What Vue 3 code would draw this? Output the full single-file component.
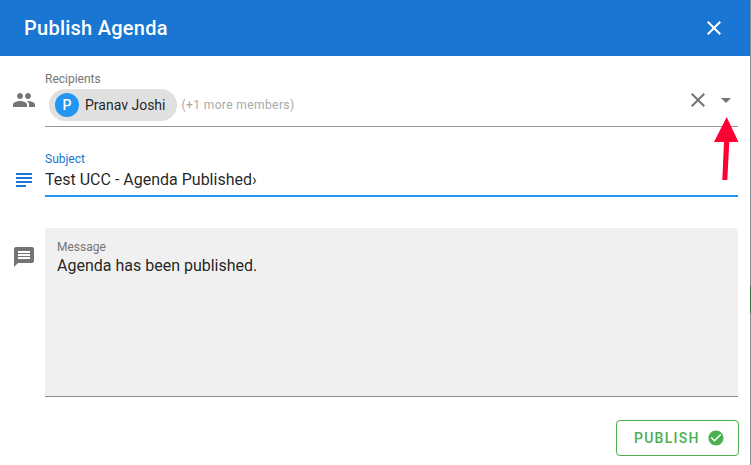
<script setup>
import { ref } from "vue";

const subject = ref("Test UCC - Agenda Published›")
const message = ref("Agenda has been published.")
</script>

<template>
    <div class="page">
        <div class="dialog">
            <header class="title-bar">
                <h1>Publish Agenda</h1>
                <button class="close" type="button" aria-label="Close">
                    <svg viewBox="0 0 24 24" width="24" height="24"><path fill="#fff" d="M19 6.41 17.59 5 12 10.59 6.41 5 5 6.41 10.59 12 5 17.59 6.41 19 12 13.41 17.59 19 19 17.59 13.41 12z" /></svg>
                </button>
            </header>

            <div class="body">
                <div class="row recipients">
                    <svg class="icon" viewBox="0 0 24 24" width="24" height="24"><path d="M16 11c1.66 0 2.99-1.34 2.99-3S17.66 5 16 5c-1.66 0-3 1.34-3 3s1.34 3 3 3zm-8 0c1.66 0 2.99-1.34 2.99-3S9.66 5 8 5C6.34 5 5 6.34 5 8s1.34 3 3 3zm0 2c-2.33 0-7 1.17-7 3.5V19h14v-2.5c0-2.33-4.67-3.5-7-3.5zm8 0c-.29 0-.62.02-.97.05 1.16.84 1.97 1.97 1.97 3.45V19h6v-2.5c0-2.33-4.67-3.5-7-3.5z" /></svg>
                    <div class="field">
                        <label>Recipients</label>
                        <div class="chips">
                            <span class="chip"><span class="avatar">P</span>Pranav Joshi</span>
                            <span class="more">(+1 more members)</span>
                            <span class="spacer"></span>
                            <svg class="clear" viewBox="0 0 24 24" width="24" height="24"><path d="M19 6.41 17.59 5 12 10.59 6.41 5 5 6.41 10.59 12 5 17.59 6.41 19 12 13.41 17.59 19 19 17.59 13.41 12z" /></svg>
                            <svg class="caret" viewBox="0 0 24 24" width="24" height="24"><path d="M7 10l5 5 5-5z" /></svg>
                        </div>
                    </div>
                </div>

                <div class="row subject">
                    <svg class="icon blue" viewBox="0 0 24 24" width="24" height="24"><path d="M4 5h16v2H4zM4 9h16v2H4zM4 13h16v2H4zM4 17h10v2H4z" /></svg>
                    <div class="field focused">
                        <label>Subject</label>
                        <div class="value">{{ subject }}</div>
                    </div>
                </div>

                <div class="row message">
                    <svg class="icon" viewBox="0 0 24 24" width="24" height="24"><path d="M20 2H4c-1.100 0-2 .9-2 2v18l4-4h14c1.100 0 2-.9 2-2V4c0-1.100-.9-2-2-2zm-2 12H6v-2h12v2zm0-3H6V9h12v2zm0-3H6V6h12v2z" /></svg>
                    <div class="field filled">
                        <label>Message</label>
                        <div class="value">{{ message }}</div>
                    </div>
                </div>

                <div class="actions">
                    <button class="publish" type="button">
                        PUBLISH
                        <svg viewBox="0 0 24 24" width="18" height="18"><path fill="#4caf50" d="M12 2C6.48 2 2 6.48 2 12s4.480 10 10 10 10-4.480 10-10S17.520 2 12 2zm-2 15-5-5 1.410-1.410L10 14.170l7.590-7.590L19 8z" /></svg>
                    </button>
                </div>
            </div>
        </div>

        <svg class="arrow" viewBox="0 0 26 64" width="26" height="64"><path fill="#ff0033" d="M12.700 0 24.500 25 15.300 25 13.300 63 8.300 63 10 25 0 25z" /></svg>
    </div>
</template>

<style>
html, body {
    margin: 0;
    background: #fff;
}
</style>

<style scoped>
* {
    box-sizing: border-box;
}

.page {
    position: relative;
    width: 751px;
    height: 465px;
    overflow: hidden;
    font-family: Roboto, "Liberation Sans", sans-serif;
    background: linear-gradient(#8a8a8a 286px, #3f7048 286px, #3f7048 313px, #8a8a8a 313px);
}

.dialog {
    width: 750px;
    height: 465px;
    background: #fff;
}

.title-bar {
    height: 56px;
    background: #1976d2;
    display: flex;
    align-items: center;
    justify-content: space-between;
    padding: 0 24px;
}

.title-bar h1 {
    margin: 0;
    font-size: 20px;
    font-weight: 500;
    letter-spacing: 0.25px;
    color: #fff;
}

.close {
    width: 24px;
    height: 24px;
    padding: 0;
    border: 0;
    background: none;
}

.body {
    padding: 16px 12px 0;
}

.row {
    display: flex;
    align-items: flex-start;
}

.icon {
    flex: none;
    fill: #757575;
    margin-right: 9px;
}

.icon.blue {
    fill: #1976d2;
}

.recipients .icon {
    margin-top: 16px;
}

.subject {
    margin-top: 25px;
}

.subject .icon {
    margin-top: 16px;
}

.message {
    margin-top: 31px;
}

.message .icon {
    margin-top: 17px;
}

.field {
    flex: 1;
    min-width: 0;
}

label {
    display: block;
    font-size: 12px;
    line-height: 14px;
    color: #757575;
}

.chips {
    display: flex;
    align-items: center;
    height: 41px;
    padding-left: 4px;
    padding-bottom: 3px;
    border-bottom: 1px solid #949494;
}

.chip {
    display: inline-flex;
    align-items: center;
    height: 32px;
    padding: 0 12px 0 6px;
    gap: 6px;
    border-radius: 16px;
    background: #e0e0e0;
    font-size: 14px;
    color: rgba(0, 0, 0, 0.87);
}

.avatar {
    width: 24px;
    height: 24px;
    border-radius: 50%;
    background: #2196f3;
    color: #fff;
    font-size: 14px;
    font-weight: 500;
    line-height: 24px;
    text-align: center;
}

.more {
    margin-left: 4px;
    font-size: 12px;
    letter-spacing: 0.4px;
    color: #a8a8a8;
}

.spacer {
    flex: 1;
}

.clear {
    fill: #757575;
    margin-right: 4px;
    margin-bottom: 10px;
}

.caret {
    fill: #757575;
    margin-bottom: 10px;
}

.focused label {
    color: #1976d2;
}

.value {
    font-size: 16px;
    line-height: 24px;
    color: rgba(0, 0, 0, 0.87);
}

.focused .value {
    height: 31px;
    padding-top: 2px;
    border-bottom: 2px solid #2196f3;
}

.filled {
    height: 169px;
    padding: 12px 12px 0;
    background: #f0f0f0;
    border-bottom: 1px solid #8c8c8c;
    border-radius: 4px 4px 0 0;
}

.actions {
    display: flex;
    justify-content: flex-end;
    margin-top: 23px;
    margin-right: -1px;
}

.publish {
    display: flex;
    align-items: center;
    gap: 7px;
    width: 123px;
    height: 36px;
    padding: 0 0 0 17px;
    border: 1px solid #4caf50;
    border-radius: 4px;
    background: #fff;
    color: #4caf50;
    font-family: inherit;
    font-size: 14px;
    font-weight: 500;
    letter-spacing: 1.25px;
}

.arrow {
    position: absolute;
    left: 714px;
    top: 117px;
}
</style>
